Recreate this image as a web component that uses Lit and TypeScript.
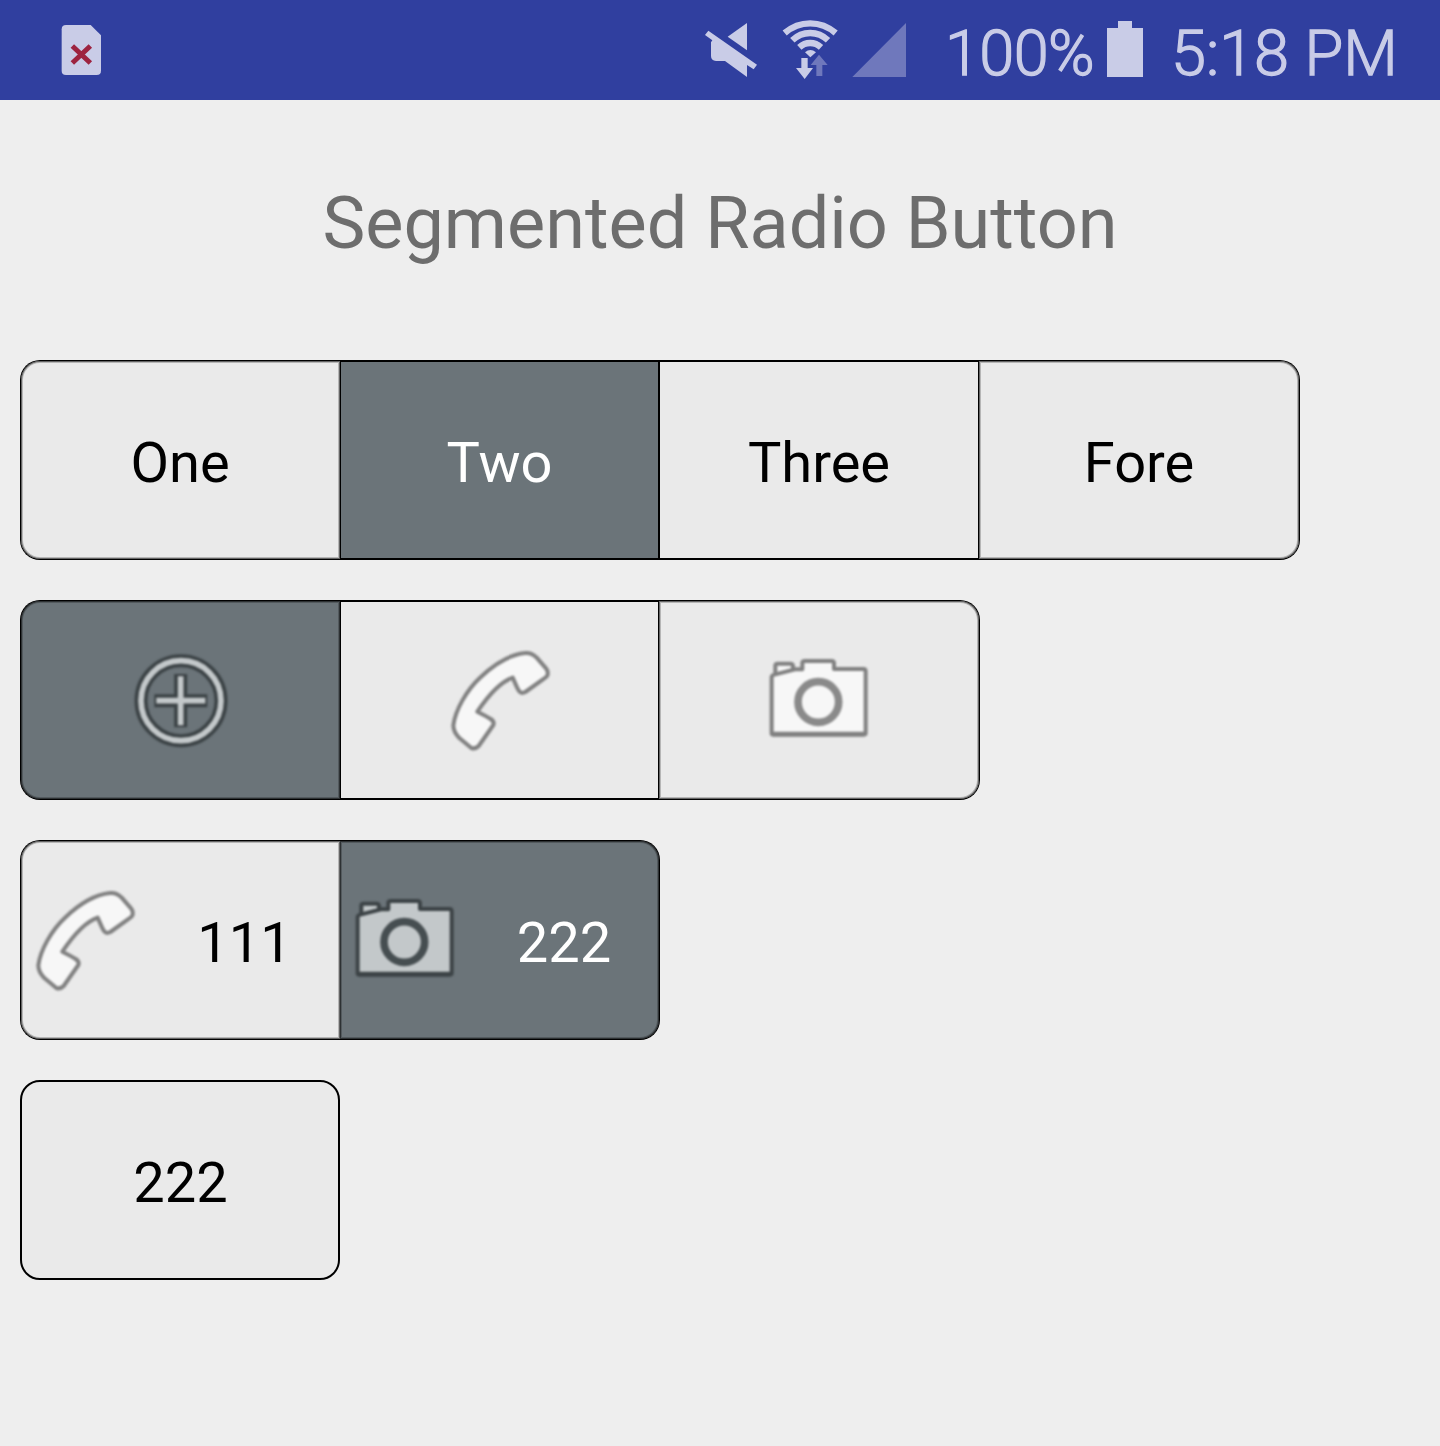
import { LitElement, html, css, svg, nothing } from "lit";
import { customElement, property } from "lit/decorators.js";
import { classMap } from "lit/directives/class-map.js";

type IconName = "add" | "call" | "camera";

interface Segment {
  label?: string;
  icon?: IconName;
  checked?: boolean;
  shape: string;
}

const GROUPS: Segment[][] = [
  [
    { label: "One", shape: "first" },
    { label: "Two", shape: "middle wide", checked: true },
    { label: "Three", shape: "middle follow" },
    { label: "Fore", shape: "last overlap" },
  ],
  [
    { icon: "add", shape: "first", checked: true },
    { icon: "call", shape: "middle" },
    { icon: "camera", shape: "last overlap" },
  ],
  [
    { icon: "call", label: "111", shape: "first" },
    { icon: "camera", label: "222", shape: "last", checked: true },
  ],
  [{ label: "222", shape: "single" }],
];

@customElement("menu-icon")
export class MenuIcon extends LitElement {
  @property() name: IconName = "add";
  @property({ type: Boolean, reflect: true }) checked = false;

  static styles = css`
    :host {
      display: block;
      width: 120px;
      height: 120px;
      flex: none;
      --line: #808080;
      --fill: #f7f7f7;
    }
    :host([checked]) {
      --line: #3c4346;
      --fill: #c3c8ca;
    }
    svg {
      display: block;
      filter: blur(0.9px);
    }
    .shape {
      fill: var(--fill);
      stroke: var(--line);
      stroke-width: 12;
      stroke-linejoin: round;
    }
    .under,
    .over,
    .lens,
    .base {
      fill: none;
      stroke: var(--line);
    }
    .under {
      stroke-width: 39;
      stroke-linejoin: round;
    }
    .over {
      stroke: var(--fill);
      stroke-width: 17;
    }
    .lens {
      stroke-width: 23;
      stroke-opacity: 0.92;
    }
    .base {
      stroke-width: 13;
      stroke-linecap: round;
    }
  `;

  private glyph() {
    switch (this.name) {
      case "add":
        return svg`
          <circle class="under" cx="183" cy="182" r="120" />
          <path class="under" d="M103 182H262M182 102V262" />
          <circle class="over" cx="183" cy="182" r="120" />
          <path class="over" d="M109 182H256M182 109V256" />`;
      case "call":
        return svg`<path class="shape" d="M255 39C270 37 280 43 290 53L318 85Q326 95 322 107Q320 111 312 116L256 156Q244 162 238 154Q232 146 230 140L218 113Q170 129 112 215Q140 229 152 237Q164 245 160 255L116 318Q106 328 94 324L58 294Q40 276 40 256C46 210 80 150 120 113Q190 46 255 39Z" />`;
      default:
        return svg`
          <path class="shape" d="M49 106V77Q49 71 56 71H94Q102 71 102 79V90Z" />
          <path class="shape" d="M38 280V112Q38 106 46 104L108 88H130V69Q130 63 138 63H217Q225 63 225 70V87H313Q320 87 320 94V280Q320 284 314 284H42Q38 284 38 280Z" />
          <path class="base" d="M42 282H315" />
          <circle class="lens" cx="178" cy="186" r="61" />`;
    }
  }

  render() {
    return html`<svg width="120" height="120" viewBox="0 0 360 360">${this.glyph()}</svg>`;
  }
}

@customElement("status-bar")
export class StatusBar extends LitElement {
  static styles = css`
    :host {
      display: flex;
      align-items: center;
      height: 100px;
      background: #303f9f;
      color: #c9cce7;
      font: 300 63px/100px Roboto, sans-serif;
      -webkit-text-stroke: 1.3px #c9cce7;
      white-space: nowrap;
    }
    svg {
      display: block;
      flex: none;
    }
    .sim {
      margin-left: 60px;
    }
    .radios {
      margin-left: auto;
    }
    .level {
      width: 162px;
      margin-left: 25px;
      padding-top: 8px;
      letter-spacing: -0.6px;
    }
    .clock {
      width: 225px;
      margin-left: 28px;
      margin-right: 44px;
      padding-top: 8px;
    }
    .light {
      fill: #c9cce7;
      stroke: none;
    }
    .dim {
      fill: #6f78bc;
    }
    .arc {
      fill: none;
      stroke: #c9cce7;
      stroke-width: 19;
    }
    .cross {
      stroke: #9d2340;
      stroke-width: 15;
    }
  `;

  render() {
    return html`
      <svg class="sim" width="44" height="100" viewBox="0 0 132 300">
        <path class="light" d="M18 75H92L123 106V212Q123 225 110 225H18Q5 225 5 212V88Q5 75 18 75Z" />
        <path class="cross" d="M37 138L91 189M91 138L37 189" />
      </svg>
      <svg class="radios" width="218" height="100" viewBox="36 0 654 300">
        <path class="light" d="M171 69V151L113 110Z" />
        <path class="light" d="M55 92L201 194L191 208L171 195V231L105 183H78Q63 182 63 168V127L67 121L45 105Z" />
        <path class="arc" d="M284 99Q318 70 360.500 70Q403 70 437 99" />
        <path class="arc" d="M307 121Q330 99 360.500 99Q391 99 414 121" />
        <path class="arc" d="M328 142Q342 129 360.500 129Q379 129 393 142" />
        <path class="light" d="M345 157Q361 143 378 157L361 172Z" />
        <path class="light" d="M334 174H353V204H369L344 237L318 204H334Z" />
        <path class="dim" d="M387 164L413 195H397V228H379V195H362Z" />
        <path class="dim" d="M648 69V231H487Z" />
      </svg>
      <span class="level">100%</span>
      <svg width="36" height="100" viewBox="0 0 36 100">
        <path class="light" d="M0 28H11V21H25V28H36V77H0Z" />
      </svg>
      <span class="clock">5:18 PM</span>
    `;
  }
}

@customElement("segmented-group")
export class SegmentedGroup extends LitElement {
  @property({ attribute: false }) segments: Segment[] = [];

  static styles = css`
    :host {
      display: flex;
      height: 200px;
    }
    .segment {
      box-sizing: border-box;
      display: flex;
      align-items: center;
      justify-content: center;
      width: 320px;
      border: 0 solid #000;
      background: #eaeaea;
      color: #000;
      font: 400 56px/66px Roboto, sans-serif;
    }
    .checked {
      background: #6b7479;
      color: #fff;
    }
    .first {
      padding-right: 1px;
      border-width: 1px 0 1px 1px;
      border-radius: 20px 0 0 20px;
      box-shadow: inset 0 0 0 1px rgba(0, 0, 0, 0.45), inset 0 0 0 2px rgba(0, 0, 0, 0.22);
    }
    .middle {
      width: 319px;
      border-width: 2px 1px;
    }
    .wide {
      width: 320px;
      border-right-width: 2px;
    }
    .follow {
      border-left-width: 0;
    }
    .last {
      border-width: 1px 1px 1px 0;
      border-radius: 0 20px 20px 0;
      box-shadow: inset 0 0 0 1px rgba(0, 0, 0, 0.45), inset 0 0 0 2px rgba(0, 0, 0, 0.22);
    }
    .overlap {
      width: 321px;
    }
    .single {
      padding-left: 1px;
      border-width: 2px;
      border-radius: 20px;
    }
    .paired {
      justify-content: flex-start;
    }
    .first.paired {
      padding: 0 0 0 4px;
    }
    .last.paired {
      padding-left: 5px;
    }
    .label {
      padding-top: 6px;
    }
    .paired .label {
      flex: 1;
      padding-left: 4px;
      text-align: center;
    }
  `;

  render() {
    return this.segments.map((s) => {
      const classes: Record<string, boolean> = {
        segment: true,
        checked: !!s.checked,
        paired: !!(s.icon && s.label),
      };
      s.shape.split(" ").forEach((c) => (classes[c] = true));
      return html`<div class=${classMap(classes)}>
        ${s.icon ? html`<menu-icon .name=${s.icon} ?checked=${!!s.checked}></menu-icon>` : nothing}
        ${s.label ? html`<span class="label">${s.label}</span>` : nothing}
      </div>`;
    });
  }
}

@customElement("app-root")
export class AppRoot extends LitElement {
  static styles = css`
    :host {
      display: block;
      min-height: 1446px;
      background: #eeeeee;
    }
    .title {
      margin: 0;
      padding: 82px 0 94px;
      text-align: center;
      color: #6d6d6d;
      font: 400 72px/84px Roboto, sans-serif;
    }
    .groups {
      display: flex;
      flex-direction: column;
      gap: 40px;
      padding: 0 20px;
    }
  `;

  render() {
    return html`
      <status-bar></status-bar>
      <h1 class="title">Segmented Radio Button</h1>
      <div class="groups">
        ${GROUPS.map((g) => html`<segmented-group .segments=${g}></segmented-group>`)}
      </div>
    `;
  }
}
